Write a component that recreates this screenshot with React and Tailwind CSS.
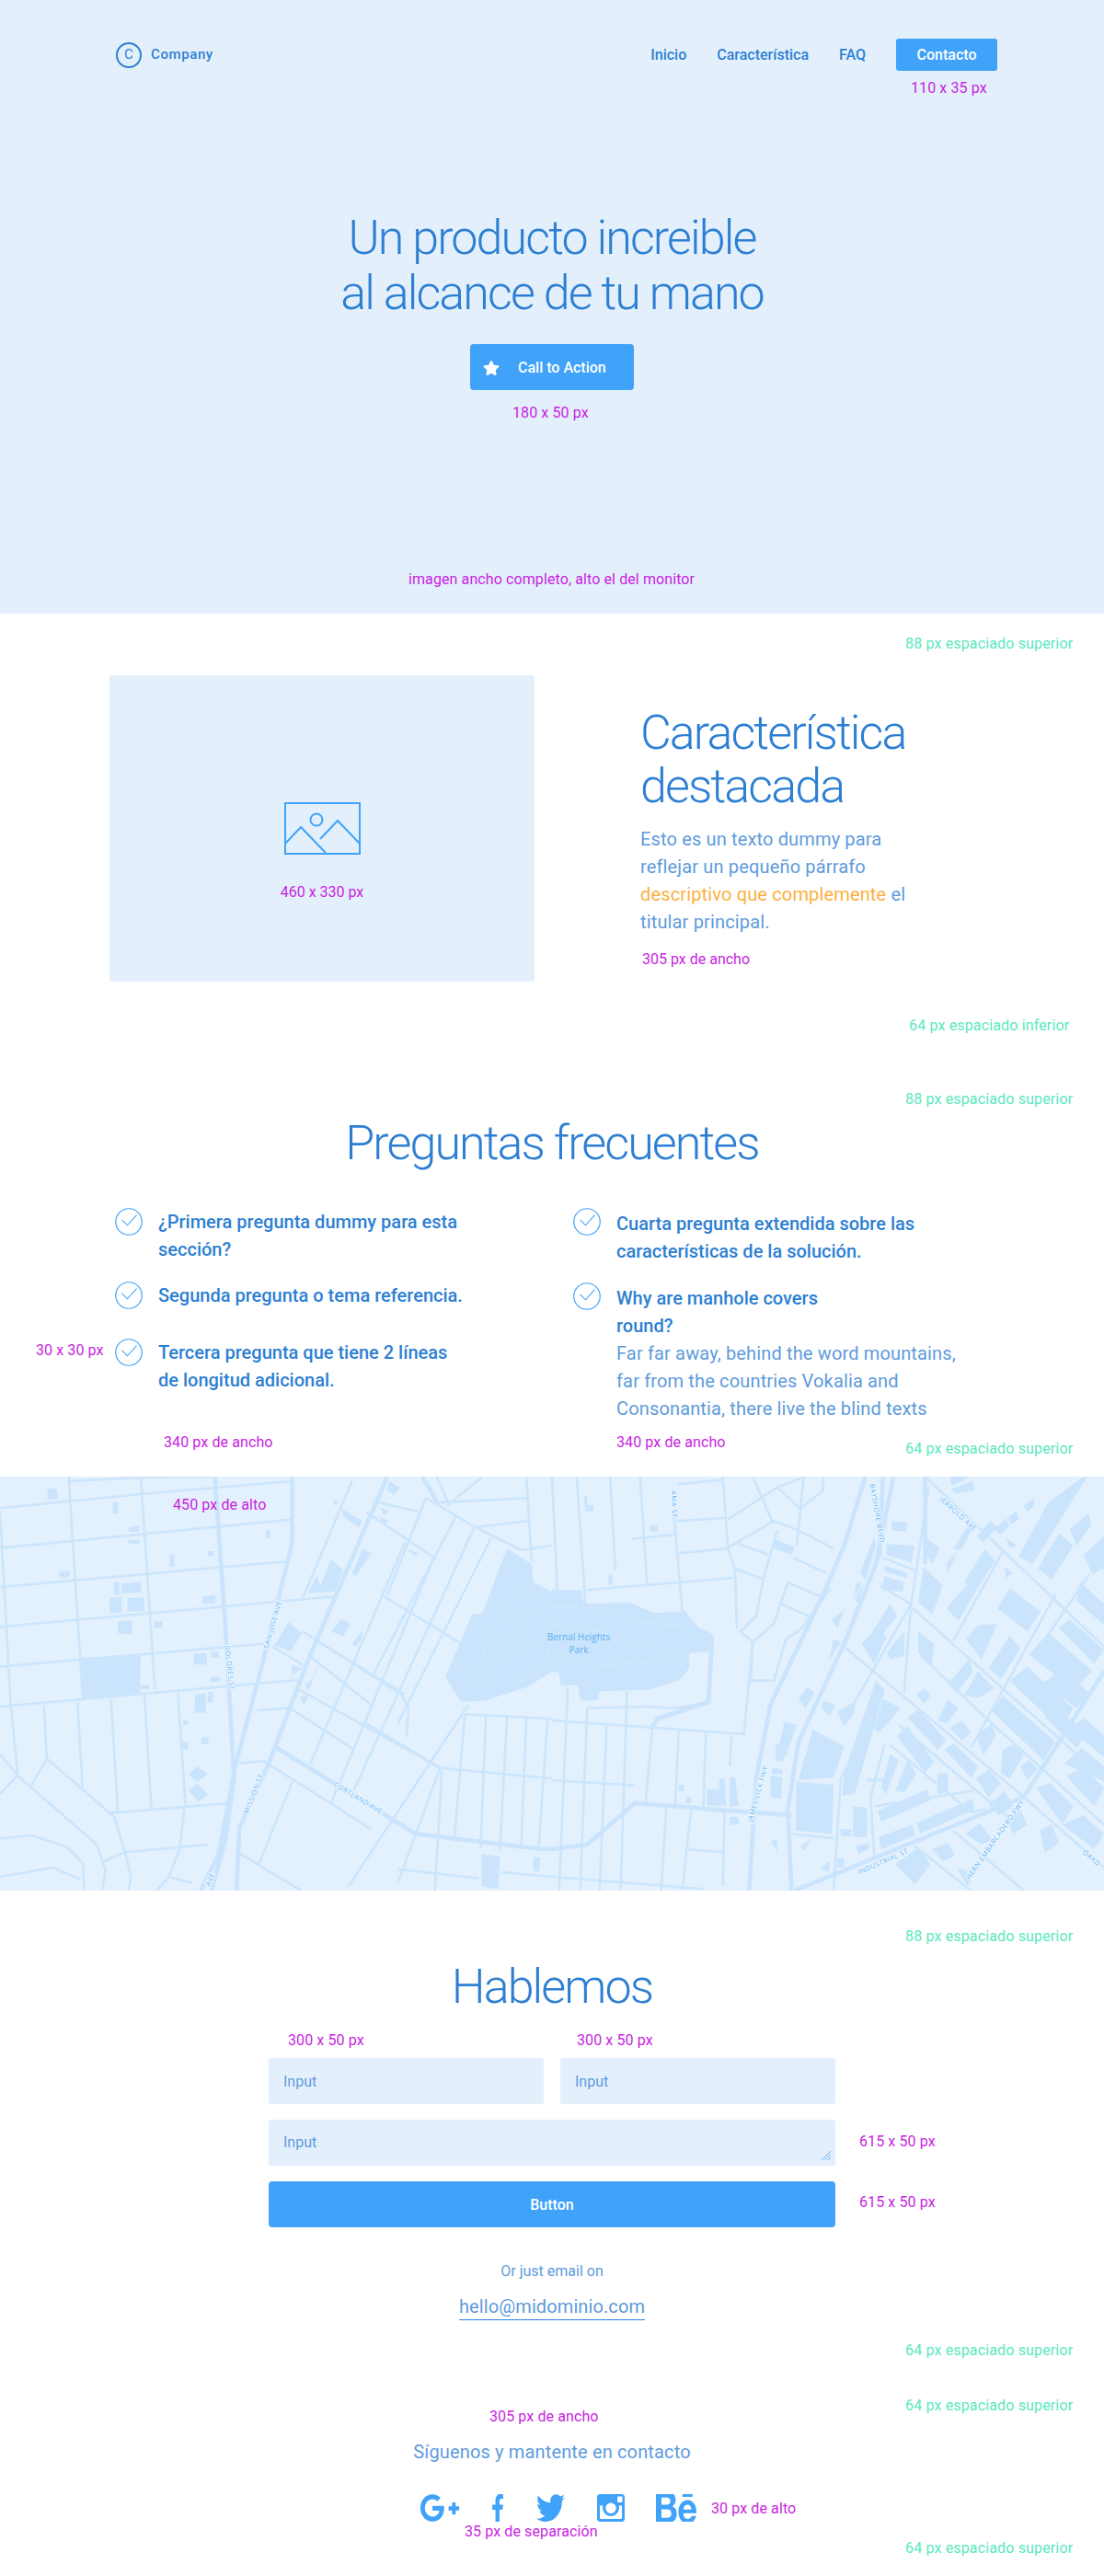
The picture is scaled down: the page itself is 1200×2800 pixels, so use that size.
import React from "react";
import { FaGooglePlusG, FaFacebookF, FaTwitter, FaBehance, FaStar } from "react-icons/fa";

const pink = "absolute whitespace-nowrap text-[16px] tracking-[0.1px] leading-5 text-[#c81fe0]";
const mint = "absolute left-[984px] whitespace-nowrap text-[16px] tracking-[0.15px] leading-5 text-[#5ae8c0]";
const h2 = "font-light text-[52px] leading-[58px] tracking-[-1.9px] text-[#2d7fd3]";

const leftThin = [
  "0,118 400,72 830,30","195,30 400,18 600,15","0,248 830,155","0,375 810,292","0,505 960,405","0,635 750,560","775,570 860,630","0,765 850,678",
  "195,15 235,740","220,750 235,1040","400,15 440,710","0,130 30,750 50,985","125,760 133,935","315,740 335,1110","410,725 430,1100","505,715 527,1090",
  "133,935 325,1125 355,1240 372,1320 365,1365","0,920 50,990 275,1215 300,1300 290,1365","50,990 0,1050","133,935 88,1025","315,1112 650,1080","355,1240 590,1215","295,1270 355,1240",
  "0,1195 90,1185 190,1222 235,1275 240,1365","0,1320 150,1290 230,1330","525,1090 510,1230 480,1320 445,1365","480,1320 545,1340","730,778 820,770","680,950 750,943 1055,1165","830,1010 735,1280","675,1240 855,1365",
  "1000,30 860,410","1150,230 880,955","1230,285 940,1080","1295,145 1060,660","1345,185 1000,1050","1395,215 1130,820","1330,760 990,1350","1210,85 1100,400",
  "1040,130 1240,285","1060,95 1190,130","1090,405 1310,560","860,520 1140,725 1160,770 1155,860","905,555 1150,725","880,600 1055,760","850,710 1250,965","830,775 1005,905","1250,965 1568,1000","1320,790 1568,805",
  "1320,790 1290,1200","1380,795 1365,1225","1440,800 1420,1230","1495,800 1480,1230","1555,805 1530,1230","1255,975 1235,1365","1210,85 1350,180 1480,255 1568,240","1240,100 1500,85","1350,180 1500,160","1495,15 1510,290","1240,15 1275,105","1270,110 1370,15","1130,1295 1360,1325","1425,1305 1568,1320",
  "1250,965 1130,1340","1040,820 1250,965",
];
const leftThick = ["610,15 640,500 665,1000 640,1200 600,1365","830,15 830,230 740,650 670,950 620,1250 570,1365","1100,15 880,600 760,960 680,1160 672,1365","780,895 1180,1180 1540,1230 1568,1228","1200,15 1240,95"];
const leftBlocks = [
  "1568,390 1515,360 1510,300 1440,250 1370,460 1340,465 1265,670 1310,750 1380,745 1500,700 1568,650",
  "232,605 400,600 398,725 235,738","320,100 335,100 335,135 320,135","135,55 160,55 165,88 135,90","365,180 395,175 395,195 365,195","365,222 395,220 395,235 365,235","168,325 198,322 198,342 168,345",
  "345,365 400,358 400,392 345,395","322,362 338,360 340,400 325,402","312,410 345,408 345,458 312,460","362,412 408,408 410,452 362,456","575,408 612,400 612,428 575,430","335,488 375,484 375,530 335,525","438,488 462,486 462,508 438,508",
  "755,190 768,190 768,215 755,215","590,258 606,258 606,275 590,275","482,272 495,270 495,310 482,310","550,592 588,590 588,628 552,628","600,588 622,586 622,606 600,606","598,668 625,668 625,684 598,684","400,695 424,695 424,708 400,708",
  "555,725 585,722 585,785 552,785","590,718 605,716 605,750 590,752","520,810 535,810 535,825 520,825","518,880 534,880 534,905 518,905","572,865 592,865 592,888 572,888","535,985 560,960 590,985 560,1010","535,1040 560,1015 590,1050 565,1075",
  "780,565 820,490 858,525 825,585","828,628 860,640 830,662","910,372 940,285 975,320 950,390 875,395 900,340","940,520 970,480 995,495 975,535","1000,560 1030,515 1030,540 1010,570","850,735 878,725 865,760","865,700 890,670 880,708","895,650 905,620 895,670",
  "1155,250 1190,265 1175,272","1075,145 1105,160 1090,168","1080,115 1105,130 1090,140","1105,30 1135,50 1120,75 1100,60","945,90 960,100 950,110","970,120 1030,160 1020,180 975,145","1030,250 1055,265 1010,340 1000,330","1368,1245 1420,1255 1415,1360 1368,1350","1515,1255 1535,1258 1530,1305 1515,1300",
];
const leftPale = ["260,625 270,690 295,680 295,715 260,715 250,625","1460,540 1500,535 1500,572 1462,575","1568,430 1480,385 1420,470 1370,600 1330,690","1568,480 1500,440 1440,540 1400,640 1370,720","1568,540 1540,640 1440,710"];

const rightThin = [
  "70,15 95,430","0,15 15,385","165,15 180,320","250,15 270,365","100,385 515,345","345,120 370,455","355,40 485,25","355,160 490,150","225,218 345,205","360,265 500,250","485,15 500,250 520,320 525,510",
  "570,15 625,160","500,155 640,50 720,15","640,50 705,120","715,15 695,240","770,15 770,60 705,120","495,250 630,160 700,190 800,250","530,235 615,270","685,280 780,330","520,315 600,350","670,360 770,410","650,430 730,470","640,190 600,350",
  "600,350 580,470 535,520 570,555 630,495 670,360","570,555 565,680 630,680 665,545 710,510 790,380","0,810 545,855 570,555","45,700 20,1365","100,770 80,1365","155,830 135,1365","213,715 195,1365","285,830 265,1090","360,840 350,1090","437,850 430,1090","510,860 505,960","0,1005 235,1022",
  "100,770 270,765 340,770 380,765 440,750 455,535","290,825 300,800 400,765","325,1090 310,1365","395,1100 370,1365","490,1110 485,1350","380,1230 490,1240","0,1320 430,1360",
  "1060,15 1568,570","1020,440 1568,1000","830,570 1340,1060 1568,1290","960,890 1190,1110 1230,1100","985,825 1320,1150","915,1090 1195,1040","1020,430 1000,720","1070,50 1020,430 830,810","1280,260 1140,550","1430,400 1190,900","1525,335 1410,530","1050,600 1230,800","1230,800 1568,1150","1140,1170 1340,1365","1030,1220 1190,1365","680,1180 800,1195","915,790 820,1000 800,1365","945,885 905,1060 915,1250",
  "940,280 1030,320","930,370 1020,430",
];
const rightThick = ["890,15 830,240 770,400 620,760 580,1000 560,1365","970,15 920,300 830,560 700,880 670,1100 680,1365","0,1230 100,1215 235,1080 680,1120","690,1365 1340,1060 1568,650","370,455 415,515 455,535","455,535 445,750 300,805 285,830","1060,15 1060,300","940,15 930,280"];
const rightBlocks = [
  "0,385 85,385 90,430 220,425 290,460 370,455 415,515 455,535 445,585 390,590 390,640 360,680 270,710 135,715 130,745 80,745 75,695 25,695 20,655 0,650",
  "1325,275 1410,100 1510,15 1520,15 1365,300","1380,315 1440,200 1480,240 1420,350","1120,445 1190,355 1205,385 1155,485","1170,360 1230,250 1258,290 1205,385","1265,445 1300,380 1388,455 1350,520","1240,640 1300,535 1330,575 1275,675","1355,595 1410,525 1535,650 1480,710","1300,680 1350,635 1480,770 1445,840","1250,780 1280,730 1430,880 1395,940","1475,840 1510,800 1568,860 1568,930","1375,1030 1415,1015 1480,1090 1450,1150",
  "700,1005 740,840 830,895 800,995","695,1010 800,1020 795,1180 692,1170","825,1055 830,980 920,680 945,710 860,1050","915,840 940,740 990,770 930,850","855,1090 895,1095 895,1190 855,1190","925,1105 1065,1035 1075,1070 935,1140","1035,1145 1195,1065 1200,1100 1045,1180","928,1190 1025,1150 1030,1185 935,1230",
  "980,860 1010,830 1085,945 1060,980","1010,800 1040,775 1120,875 1095,905","1115,905 1140,885 1210,960 1190,995","950,235 1030,240 1020,295 950,270","1060,210 1100,250 1080,300 1060,260","1055,310 1110,370 1080,465 1040,425","1550,230 1568,250 1568,320 1510,280","1500,360 1568,430 1568,500 1490,420","1440,510 1470,480 1568,580 1540,625","1460,990 1510,965 1568,1030 1540,1090","1470,185 1525,135 1530,175 1490,240",
  "1255,190 1290,150 1300,175 1275,205","1295,150 1320,125 1325,155 1305,170","1340,110 1370,85 1370,110 1350,130","1135,55 1195,30 1200,60 1145,70","1130,15 1190,15 1135,45","965,160 1010,165 1005,195 965,190","1290,215 1320,240 1300,250","1285,310 1310,330 1290,345",
  "1175,545 1210,500 1265,495 1220,610","1125,690 1185,610 1195,650 1150,720","1170,730 1210,650 1255,705 1215,735","1095,810 1125,740 1155,770 1120,820","1130,835 1165,810 1190,850 1165,875","1040,520 1085,560 1080,630 1040,590","1035,725 1060,705 1075,730 1055,755",
  "1205,860 1250,820 1260,860 1225,925","1280,905 1310,890 1340,920 1300,1000 1275,980","1330,960 1355,940 1380,970 1350,1005","1205,1000 1240,970 1275,1015 1240,1060","1175,1180 1215,1145 1250,1200 1220,1215","1080,1230 1125,1210 1145,1250 1110,1270","975,1280 1040,1225 1075,1280 1030,1345","1150,1290 1200,1310 1180,1350","1095,985 1125,980 1125,1045 1095,1050",
  "935,1030 960,920 985,940 950,1050","975,1040 1010,940 1035,985 1000,1045","895,1000 950,1000 950,1010 895,1010","440,1035 475,1035 475,1090 440,1085","475,1000 490,1000 495,1090 475,1085","505,995 520,995 530,1090 505,1090","505,1125 530,1125 530,1150 505,1150","360,1020 375,1020 375,1040 360,1040","380,1060 395,1060 395,1080 380,1080","278,175 300,175 300,195 278,195","160,335 172,335 172,368 160,368","90,80 100,80 100,108 118,108 118,128 95,128",
  "632,220 690,245 680,270 622,245","660,815 695,825 665,925 640,920","635,885 670,900 655,945 635,940","620,990 655,995 650,1065 622,1062","625,965 655,970 655,985 625,985","880,360 855,420 865,360","795,480 830,450 810,510","800,545 820,555 785,620","700,740 725,700 745,720 720,770","810,780 860,750 860,785 830,830","770,745 805,760 790,795 765,770","620,1205 640,1195 640,1235","820,1165 850,1165 850,1188 820,1188","865,1220 900,1210 900,1230 870,1245","810,1260 830,1260 830,1290 810,1290","705,1220 740,1195 715,1235","760,1290 790,1270 785,1305",
  "875,330 915,210 920,240 890,350","860,420 880,370 885,370 870,425","945,340 1000,360 995,390 935,385","945,305 1010,330 1005,345 945,325","880,560 925,505 950,540 915,625","910,520 960,430 980,470 935,535","950,590 1000,520 1000,600 960,610",
  "1140,250 1185,170 1195,185 1160,255","1120,300 1150,260 1125,330","1205,210 1245,160 1265,180 1225,230","1400,800 1430,770 1520,850 1490,900","1455,950 1505,900 1568,960 1568,1010","1450,1150 1510,1120 1568,1180 1540,1230","1395,690 1450,640 1525,720 1490,770","1510,270 1568,210 1568,310 1535,335","1240,1085 1285,1040 1310,1090 1270,1120","1290,1130 1330,1100 1350,1150 1310,1180","1385,1170 1420,1150 1440,1210 1400,1240",
];
const rightPale = ["0,440 120,440 250,490 370,500 430,560","0,500 100,510 250,560 370,590","0,590 130,630 300,620 385,610","695,1010 800,1020"];

function RoadSet({ thin, thick, blocks, pale }) {
  return (
    <>
      {blocks.map((p, i) => <polygon key={i} points={p} fill="#c9e4fc" />)}
      {thin.map((p, i) => <polyline key={i} points={p} fill="none" stroke="#cbe5fc" strokeWidth="2.6" vectorEffect="non-scaling-stroke" />)}
      {thick.map((p, i) => <polyline key={i} points={p} fill="none" stroke="#c9e4fc" strokeWidth="4.6" vectorEffect="non-scaling-stroke" />)}
      {pale.map((p, i) => <polyline key={i} points={p} fill="none" stroke="#d6eafc" strokeWidth="1" vectorEffect="non-scaling-stroke" />)}
    </>
  );
}

function Label({ x, y, r, children, size = 7.5 }) {
  return (
    <text x={x} y={y} transform={`rotate(${r} ${x} ${y})`} textAnchor="middle" dominantBaseline="middle" fontSize={size} letterSpacing="0.5" fill="#63b3f5" stroke="#eef7ff" strokeWidth="2" paintOrder="stroke" fontFamily="'Open Sans', sans-serif">{children}</text>
  );
}

function MapArt() {
  return (
    <svg viewBox="0 0 1200 450" className="block h-[450px] w-[1200px]">
      <rect width="1200" height="450" fill="#e3f0fd" />
      <g transform="scale(0.3827 0.3333) translate(0 -15)">
        <RoadSet thin={leftThin} thick={leftThick} blocks={leftBlocks} pale={leftPale} />
      </g>
      <g transform="translate(600 0) scale(0.3827 0.3333) translate(0 -15)">
        <RoadSet thin={rightThin} thick={rightThick} blocks={rightBlocks} pale={rightPale} />
      </g>
      <Label x={249} y={208} r={84}>DOLORES ST</Label>
      <Label x={297} y={161} r={-74}>SAN JOSE AVE</Label>
      <Label x={276} y={345} r={-68}>MISSION ST</Label>
      <Label x={389} y={350} r={31}>CORTLAND AVE</Label>
      <Label x={229} y={438} r={-68}>AVE</Label>
      <Label x={732} y={30} r={88}>AMA ST</Label>
      <Label x={953} y={40} r={80}>BAYSHORE BLVD</Label>
      <Label x={1041} y={41} r={42}>JERROLD AVE</Label>
      <Label x={824} y={345} r={-74}>JAMES LICK FWY</Label>
      <Label x={960} y={419} r={-24}>INDUSTRIAL ST</Label>
      <Label x={1082} y={395} r={-55}>HERN EMBARCADERO FWY</Label>
      <Label x={1186} y={415} r={40}>OAKD</Label>
      <text x={629} y={178} textAnchor="middle" fontSize="10" fill="#5fb0f2" fontFamily="'Open Sans', sans-serif">Bernal Heights</text>
      <text x={629} y={192} textAnchor="middle" fontSize="10" fill="#5fb0f2" fontFamily="'Open Sans', sans-serif">Park</text>
    </svg>
  );
}

function Check() {
  return (
    <svg viewBox="0 0 30 30" className="h-[30px] w-[30px] shrink-0" fill="none" stroke="#40a3f9">
      <circle cx="15" cy="15" r="14.25" strokeWidth="1.2" />
      <path d="M6.5 15 L13 21.5 L24 9.5" strokeWidth="1.2" transform="translate(1.5 -1) scale(0.92)" />
    </svg>
  );
}

function Instagram() {
  return (
    <svg viewBox="0 0 30 30" className="h-[30px] w-[30px]">
      <path fill="#40a3f9" fillRule="evenodd" d="M3.5 0h23A3.5 3.5 0 0 1 30 3.5v23a3.5 3.5 0 0 1-3.500 3.500h-23A3.500 3.500 0 0 1 0 26.500v-23A3.500 3.500 0 0 1 3.500 0ZM22 3.500v4.500a1 1 0 0 0 1 1h3.500a1 1 0 0 0 1-1V3.500a1 1 0 0 0-1-1H23a1 1 0 0 0-1 1ZM3 12.500V25.500A1.500 1.500 0 0 0 4.500 27h21a1.500 1.500 0 0 0 1.500-1.500V12.500h-3.300a9 9 0 1 1-17.400 0ZM15 9.500a5.700 5.700 0 1 0 0 11.400a5.700 5.700 0 0 0 0-11.400Z" />
    </svg>
  );
}

export default function App() {
  return (
    <div className="h-[2800px] w-[1200px] overflow-hidden bg-white font-['Roboto',sans-serif] text-[#2d7fd3]">
      {/* Hero */}
      <section className="relative h-[667px] bg-[#e3f0fc] pt-[42px]">
        <nav className="ml-[126px] flex h-[35px] w-[958px] items-center">
          <div className="flex h-[28px] w-[28px] items-center justify-center rounded-full border-[2px] border-[#2d7fd3] text-[15px] leading-none">C</div>
          <span className="ml-[10px] text-[15px] font-medium tracking-[0.6px]">Company</span>
          <div className="ml-auto flex items-center gap-[33px] text-[16px] font-medium">
            <a>Inicio</a>
            <a>Característica</a>
            <a>FAQ</a>
            <a className="flex h-[35px] w-[110px] items-center justify-center rounded-[3px] bg-[#40a3f9] text-white">Contacto</a>
          </div>
        </nav>
        <span className={`${pink} left-[990px] top-[86px]`}>110 x 35 px</span>
        <h1 className="mt-[152px] text-center text-[52px] font-light leading-[60px] tracking-[-1.9px]">
          Un producto increible<br />al alcance de tu mano
        </h1>
        <button className="mx-auto mt-[25px] flex h-[50px] w-[178px] items-center rounded-[4px] bg-[#40a3f9] pl-[14px] pt-[1px] text-[16px] font-medium text-white">
          <FaStar className="h-[18px] w-[18px]" />
          <span className="ml-[20px]">Call to Action</span>
        </button>
        <span className={`${pink} left-[557px] top-[439px]`}>180 x 50 px</span>
        <span className={`${pink} left-[444px] top-[620px]`}>imagen ancho completo, alto el del monitor</span>
      </section>

      {/* Feature */}
      <section className="relative flex h-[493px] pl-[119px] pt-[67px]">
        <span className={`${mint} top-[23px]`}>88 px espaciado superior</span>
        <div className="flex h-[333px] w-[462px] flex-col items-center rounded-[3px] bg-[#e3f0fc] pt-[138px]">
          <svg viewBox="0 0 83 57" className="h-[57px] w-[83px]" fill="none" stroke="#40a3f9" strokeWidth="2">
            <rect x="1" y="1" width="81" height="55" />
            <circle cx="35" cy="19" r="6.500" />
            <path d="M1 45 L18 27 L45 55 M39 40 L58 20 L82 45" />
          </svg>
          <span className="mt-[31px] text-[16px] leading-5 text-[#c81fe0]">460 x 330 px</span>
        </div>
        <div className="ml-[115px] w-[305px] pt-[34px]">
          <h2 className={h2}>Característica destacada</h2>
          <p className="mt-[13px] text-[20px] leading-[30px] tracking-[0.15px] text-[#5e9bdc]">
            Esto es un texto dummy para reflejar un pequeño párrafo <span className="text-[#fbb040]">descriptivo que complemente</span> el titular principal.
          </p>
          <span className="mt-[16px] ml-[2px] block text-[16px] leading-5 text-[#c81fe0]">305 px de ancho</span>
        </div>
        <span className={`${mint} left-[988px] top-[438px]`}>64 px espaciado inferior</span>
      </section>

      {/* FAQ */}
      <section className="relative h-[445px] pt-[53px]">
        <span className={`${mint} top-[25px]`}>88 px espaciado superior</span>
        <h2 className={`${h2} h-[60px] text-center leading-[60px]`}>Preguntas frecuentes</h2>
        <div className="ml-[125px] mt-[40px] flex text-[20px] font-medium leading-[30px]">
          <div className="w-[498px]">
            <div className="flex w-[400px] gap-[17px]">
              <Check />
              <p className="w-[340px]">¿Primera pregunta dummy para esta sección?</p>
            </div>
            <div className="mt-[20px] flex gap-[17px]">
              <Check />
              <p>Segunda pregunta o tema referencia.</p>
            </div>
            <div className="mt-[32px] flex gap-[17px]">
              <Check />
              <p className="w-[340px]">Tercera pregunta que tiene 2 líneas de longitud adicional.</p>
            </div>
          </div>
          <div>
            <div className="flex gap-[17px]">
              <Check />
              <p className="mt-[2px] w-[340px]">Cuarta pregunta extendida sobre las características de la solución.</p>
            </div>
            <div className="mt-[19px] flex gap-[17px]">
              <Check />
              <div className="mt-[2px] w-[380px]">
                <p>Why are manhole covers<br />round?</p>
                <p className="font-normal tracking-[0.15px] text-[#5e9bdc]">Far far away, behind the word mountains, far from the countries Vokalia and Consonantia, there live the blind texts</p>
              </div>
            </div>
          </div>
        </div>
        <span className={`${pink} left-[39px] top-[298px]`}>30 x 30 px</span>
        <span className={`${pink} left-[178px] top-[398px]`}>340 px de ancho</span>
        <span className={`${pink} left-[670px] top-[398px]`}>340 px de ancho</span>
        <span className={`${mint} top-[405px]`}>64 px espaciado superior</span>
      </section>

      {/* Map */}
      <section className="relative h-[450px] overflow-hidden">
        <MapArt />
        <span className={`${pink} left-[188px] top-[21px]`}>450 px de alto</span>
      </section>

      {/* Contact */}
      <section className="relative pt-[75px]">
        <span className={`${mint} top-[40px]`}>88 px espaciado superior</span>
        <h2 className={`${h2} h-[60px] text-center leading-[60px]`}>Hablemos</h2>
        <span className={`${pink} left-[313px] top-[153px]`}>300 x 50 px</span>
        <span className={`${pink} left-[627px] top-[153px]`}>300 x 50 px</span>
        <form className="relative ml-[292px] mt-[47px] flex w-[616px] flex-col gap-[17px] text-[16px]">
          <div className="flex gap-[18px]">
            <input placeholder="Input" className="h-[50px] w-[299px] rounded-[3px] bg-[#e3f0fc] px-[16px] text-[16px] outline-none placeholder:text-[#5e9bdc]" />
            <input placeholder="Input" className="h-[50px] w-[299px] rounded-[3px] bg-[#e3f0fc] px-[16px] text-[16px] outline-none placeholder:text-[#5e9bdc]" />
          </div>
          <div className="relative h-[50px]">
            <textarea placeholder="Input" className="block h-[50px] w-full resize-none rounded-[3px] bg-[#e3f0fc] px-[16px] pt-[13px] text-[16px] leading-6 outline-none placeholder:text-[#5e9bdc]" />
            <svg viewBox="0 0 10 10" className="absolute bottom-[6px] right-[5px] h-[10px] w-[10px]" stroke="#40a3f9" strokeWidth="0.8">
              <path d="M0 10 L10 0 M3.500 10 L10 3.500 M7 10 L10 7" />
            </svg>
          </div>
          <button type="button" className="h-[50px] rounded-[4px] bg-[#40a3f9] pt-[2px] text-[16px] font-medium text-white">Button</button>
        </form>
        <span className={`${pink} left-[934px] top-[263px]`}>615 x 50 px</span>
        <span className={`${pink} left-[934px] top-[329px]`}>615 x 50 px</span>
        <p className="mt-[36px] text-center text-[16px] leading-6 text-[#5e9bdc]">Or just email on</p>
        <div className="mt-[12px] flex justify-center">
          <a className="border-b border-[#2d7fd3] text-[20px] leading-[28px] tracking-[0.1px] text-[#5e9bdc]">hello@midominio.com</a>
        </div>
        <span className={`${mint} top-[490px]`}>64 px espaciado superior</span>
        <span className={`${mint} top-[550px]`}>64 px espaciado superior</span>
        <span className={`${pink} left-[532px] top-[562px]`}>305 px de ancho</span>
        <p className="mt-[128px] text-center text-[20px] leading-[30px] tracking-[0.15px] text-[#5e9bdc]">Síguenos y mantente en contacto</p>
        <div className="ml-[457px] mt-[31px] flex h-[30px] items-center text-[#40a3f9]">
          <FaGooglePlusG viewBox="15 62 625 388" preserveAspectRatio="none" className="h-[30px] w-[43px]" />
          <FaFacebookF viewBox="0 0 320 512" preserveAspectRatio="none" className="ml-[34px] h-[30px] w-[14px]" />
          <FaTwitter viewBox="0 45 512 420" preserveAspectRatio="none" className="ml-[35px] h-[30px] w-[31px]" />
          <div className="ml-[35px]"><Instagram /></div>
          <FaBehance viewBox="0 96 576 320" preserveAspectRatio="none" className="ml-[34px] h-[30px] w-[44px]" />
        </div>
        <span className={`${pink} left-[773px] top-[662px]`}>30 px de alto</span>
        <span className={`${pink} left-[505px] top-[687px]`}>35 px de separación</span>
        <span className={`${mint} top-[705px]`}>64 px espaciado superior</span>
      </section>
    </div>
  );
}
